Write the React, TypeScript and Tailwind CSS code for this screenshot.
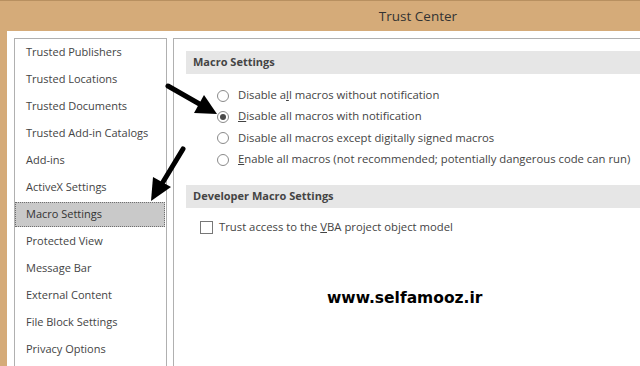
const NAV = [
  "Trusted Publishers",
  "Trusted Locations",
  "Trusted Documents",
  "Trusted Add-in Catalogs",
  "Add-ins",
  "ActiveX Settings",
  "Macro Settings",
  "Protected View",
  "Message Bar",
  "External Content",
  "File Block Settings",
  "Privacy Options",
];

const font = "font-['Open_Sans','Noto_Sans',sans-serif]";

function Radio({ checked }: { checked?: boolean }) {
  return (
    <span className="w-[12px] h-[12px] rounded-full border border-[#8a8a8a] bg-white flex items-center justify-center shrink-0">
      {checked && <span className="w-[6px] h-[6px] rounded-full bg-[#4a4a4a]" />}
    </span>
  );
}

function RadioRow({ checked, children }: { checked?: boolean; children: React.ReactNode }) {
  return (
    <div className="h-[21.3px] flex items-center gap-[9px] pl-[31px]">
      <Radio checked={checked} />
      <span className="text-[11.3px] text-[#444] whitespace-nowrap">{children}</span>
    </div>
  );
}

function Header({ children }: { children: React.ReactNode }) {
  return (
    <div className="h-[23px] bg-[#e6e6e6] flex items-center pl-[7px] text-[11px] font-bold text-[#444]">
      {children}
    </div>
  );
}

export default function App() {
  return (
    <div className={`relative w-[640px] h-[366px] bg-[#d5ab79] flex flex-col overflow-hidden ${font}`}>
      <div className="h-[31px] shrink-0 flex items-center justify-center pl-[196px] text-[13.5px] text-[#333] border-t border-[#b89060]">
        Trust Center
      </div>
      <div className="flex-1 ml-[7px] bg-white pt-[7px] pl-[7px] flex">
        {/* left nav */}
        <div className="w-[153px] border border-b-0 border-[#b0b0b0]">
          {NAV.map((n) => {
            const sel = n === "Macro Settings";
            return (
              <div key={n} className="h-[27px] py-[1px] pr-[1px]">
                <div
                  className={
                    sel
                      ? "h-full flex items-center pl-[10px] bg-[#c9c9c9] border border-dotted border-[#6f6f6f] text-[11px] text-[#333] whitespace-nowrap"
                      : "h-full flex items-center pl-[11px] text-[11px] text-[#444] whitespace-nowrap"
                  }
                >
                  {n}
                </div>
              </div>
            );
          })}
        </div>

        {/* right panel */}
        <div className="flex-1 ml-[6px] border-l border-t border-[#b0b0b0] pt-[12px] pl-[12px]">
          <Header>Macro Settings</Header>
          <div className="mt-[11px]">
            <RadioRow>
              Disable a<u>l</u>l macros without notification
            </RadioRow>
            <RadioRow checked>
              <u>D</u>isable all macros with notification
            </RadioRow>
            <RadioRow>
              Disable all macros except di<u>g</u>itally signed macros
            </RadioRow>
            <RadioRow>
              <u>E</u>nable all macros (not recommended; potentially dangerous code can run)
            </RadioRow>
          </div>

          <div className="mt-[15px]">
            <Header>Developer Macro Settings</Header>
          </div>
          <div className="mt-[11px] flex items-center gap-[6px] pl-[14px]">
            <span className="w-[13px] h-[13px] border border-[#777] bg-white shrink-0" />
            <span className="text-[11.3px] text-[#444] whitespace-nowrap">
              Trust access to the <u>V</u>BA project object model
            </span>
          </div>
        </div>
      </div>

      {/* watermark */}
      <div className="absolute left-[327px] top-[287px] text-[15.5px] font-bold text-black font-['DejaVu_Sans',sans-serif]">
        www.selfamooz.ir
      </div>

      {/* arrows */}
      <svg className="absolute left-0 top-0 pointer-events-none" width="640" height="366">
        <line x1="168" y1="86" x2="203" y2="106" stroke="#000" strokeWidth="5" strokeLinecap="round" />
        <polygon points="217,114 194,113 204,95" fill="#000" />
        <line x1="183" y1="149" x2="163" y2="182" stroke="#000" strokeWidth="5" strokeLinecap="round" />
        <polygon points="151,201 171,187 153,177" fill="#000" />
      </svg>
    </div>
  );
}
